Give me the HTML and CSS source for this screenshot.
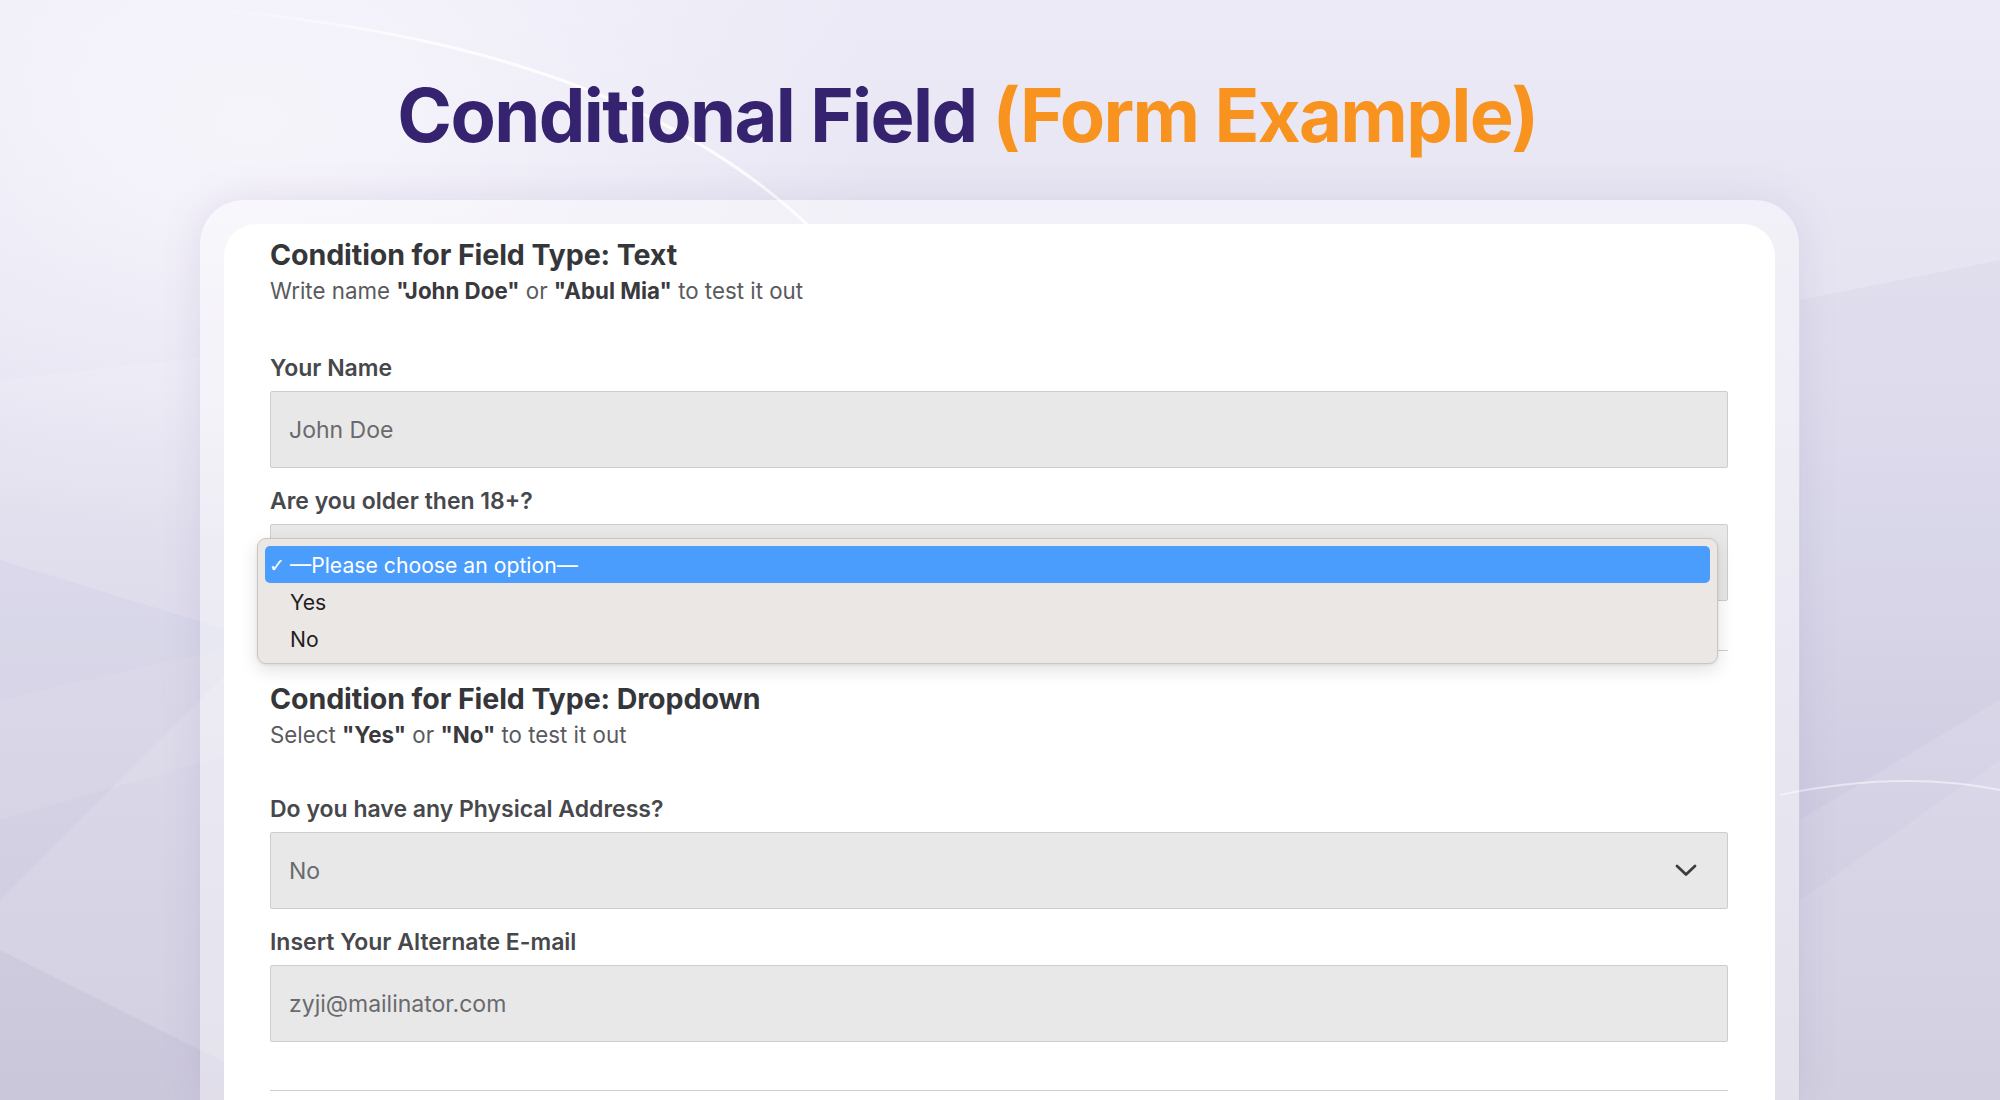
FILE: index.html
```html
<!DOCTYPE html>
<html lang="en">
<head>
<meta charset="utf-8">
<title>Conditional Field (Form Example)</title>
<link rel="stylesheet" href="styles.css">
</head>
<body>
<svg class="bg-deco" width="2000" height="1100" viewBox="0 0 2000 1100" aria-hidden="true">
  <defs>
    <linearGradient id="arcFade" x1="190" y1="8" x2="815" y2="232" gradientUnits="userSpaceOnUse">
      <stop offset="0" stop-color="#ffffff" stop-opacity="0"/>
      <stop offset="0.35" stop-color="#ffffff" stop-opacity="0.8"/>
      <stop offset="1" stop-color="#ffffff" stop-opacity="0.9"/>
    </linearGradient>
  </defs>
  <polygon points="0,380 700,300 700,1100 0,1100" fill="#ffffff" opacity="0.10"/>
  <polygon points="0,560 260,640 0,900" fill="#8f89b8" opacity="0.06"/>
  <polygon points="0,700 700,540 700,620 0,820" fill="#ffffff" opacity="0.08"/>
  <polygon points="0,950 300,1100 0,1100" fill="#7e78a8" opacity="0.08"/>
  <polygon points="1800,300 2000,260 2000,700 1800,820" fill="#8f89b8" opacity="0.06"/>
  <polygon points="1800,900 2000,760 2000,1100 1800,1100" fill="#ffffff" opacity="0.10"/>
  <path d="M 190 8 Q 620 40 815 232" fill="none" stroke="url(#arcFade)" stroke-width="3"/>
  <path d="M 1780 795 Q 1900 770 2000 790" fill="none" stroke="#ffffff" stroke-width="2" opacity="0.5"/>
</svg>

<header class="hero">
  <h1 class="hero-title"><span class="hero-dark">Conditional Field</span> <span class="hero-accent">(Form Example)</span></h1>
</header>

<main class="frame">
  <div class="card">
    <section class="block">
      <h2 class="block-title">Condition for Field Type: Text</h2>
      <p class="block-sub">Write name <b>"John Doe"</b> or <b>"Abul Mia"</b> to test it out</p>
    </section>

    <div class="field">
      <label class="field-label">Your Name</label>
      <div class="control">John Doe</div>
    </div>

    <div class="field field-open">
      <label class="field-label">Are you older then 18+?</label>
      <div class="control control-select"></div>
      <ul class="menu">
        <li class="menu-item menu-item-active"><span class="menu-check">✓</span>—Please choose an option—</li>
        <li class="menu-item">Yes</li>
        <li class="menu-item">No</li>
      </ul>
    </div>

    <hr class="divider divider-first">

    <section class="block block-second">
      <h2 class="block-title">Condition for Field Type: Dropdown</h2>
      <p class="block-sub">Select <b>"Yes"</b> or <b>"No"</b> to test it out</p>
    </section>

    <div class="field">
      <label class="field-label">Do you have any Physical Address?</label>
      <div class="control control-select">
        <span>No</span>
        <svg class="chevron" width="22" height="13" viewBox="0 0 22 13" aria-hidden="true">
          <path d="M2 2 L11 10.5 L20 2" fill="none" stroke="#3d3d3d" stroke-width="2.8" stroke-linecap="round" stroke-linejoin="round"/>
        </svg>
      </div>
    </div>

    <div class="field">
      <label class="field-label">Insert Your Alternate E-mail</label>
      <div class="control">zyji@mailinator.com</div>
    </div>

    <hr class="divider divider-last">
  </div>
</main>
</body>
</html>
```

FILE: styles.css
```css
* {
  box-sizing: border-box;
}

html, body {
  margin: 0;
  padding: 0;
}

body {
  width: 2000px;
  height: 1100px;
  overflow: hidden;
  position: relative;
  font-family: "Inter", "Noto Sans", sans-serif;
  background:
    radial-gradient(ellipse 900px 600px at 250px 120px, rgba(248, 246, 252, 0.9), rgba(248, 246, 252, 0) 70%),
    linear-gradient(180deg, #eceaf6 0%, #e4e2f0 35%, #d6d3e6 70%, #cdcadd 100%);
}

.bg-deco {
  position: absolute;
  left: 0;
  top: 0;
  pointer-events: none;
}

.hero {
  position: relative;
  padding: 78px 65px 0 0;
  height: 200px;
  display: flex;
  justify-content: center;
}

.hero-title {
  margin: 0;
  font-size: 74px;
  line-height: 74px;
  font-weight: 700;
  letter-spacing: -1.6px;
  white-space: nowrap;
}

.hero-dark {
  color: #36236f;
}

.hero-accent {
  color: #f7931e;
}

.frame {
  position: relative;
  margin-left: 200px;
  width: 1599px;
  height: 900px;
  padding: 24px 24px 0 24px;
  border-radius: 44px 44px 0 0;
  background: rgba(255, 255, 255, 0.42);
  box-shadow: 0 0 40px rgba(110, 100, 160, 0.14);
}

.card {
  background: #ffffff;
  border-radius: 32px 32px 0 0;
  height: 100%;
  padding: 14px 47px 0 46px;
}

.block-title {
  margin: 0;
  font-size: 28.6px;
  line-height: 34px;
  font-weight: 700;
  letter-spacing: -0.1px;
  color: #35363a;
}

.block-sub {
  margin: 5px 0 0 0;
  font-size: 22.3px;
  line-height: 27px;
  color: #5a5a5e;
}

.block-sub b {
  font-weight: 700;
  color: #3a3a3e;
}

.block + .field {
  margin-top: 50px;
}

.block-second + .field {
  margin-top: 47px;
}

.field {
  position: relative;
  margin-bottom: 19px;
}

.field-label {
  display: block;
  font-size: 23px;
  line-height: 28px;
  font-weight: 600;
  color: #47484c;
  margin-bottom: 9px;
}

.control {
  height: 77px;
  background: #e8e8e8;
  border: 1px solid #cdcdcd;
  border-radius: 2px;
  padding: 0 30px 0 18px;
  display: flex;
  align-items: center;
  justify-content: space-between;
  font-size: 23px;
  color: #6a6a6e;
}

.chevron {
  display: block;
}

.menu {
  position: absolute;
  left: -13px;
  top: 51px;
  width: 1461px;
  margin: 0;
  padding: 7px 7px 6px 7px;
  list-style: none;
  background: #ebe7e4;
  border: 1px solid #c9c6c4;
  border-radius: 9px;
  box-shadow: 0 6px 18px rgba(0, 0, 0, 0.12), 0 1px 3px rgba(0, 0, 0, 0.08);
  z-index: 2;
}

.menu-item {
  height: 37px;
  display: flex;
  align-items: center;
  padding-left: 25px;
  font-size: 21.2px;
  color: #1f1f1f;
  border-radius: 5px;
}

.menu-item-active {
  position: relative;
  background: #4a9dfd;
  color: #ffffff;
}

.menu-check {
  position: absolute;
  left: 4px;
  font-family: "DejaVu Sans", sans-serif;
  font-size: 19px;
}

.divider {
  border: 0;
  height: 1px;
  background: #cfcfcf;
  margin: 0;
}

.divider-first {
  margin-top: 49px;
  margin-bottom: 31px;
}

.divider-last {
  margin-top: 48px;
}
```
